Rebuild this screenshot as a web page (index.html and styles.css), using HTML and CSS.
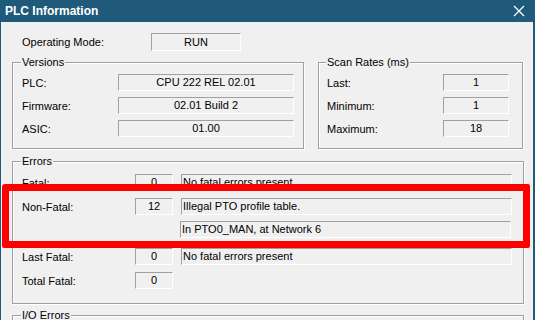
FILE: index.html
```html
<!DOCTYPE html>
<html lang="en">
<head>
    <meta charset="UTF-8">
    <title>PLC Information</title>
    <link rel="stylesheet" href="styles.css">
</head>
<body>
    <div class="window">
        <div class="titlebar">
            <span class="title">PLC Information</span>
            <svg class="close" width="12" height="12" viewBox="0 0 12 12">
                <path d="M1 1 L11 11 M11 1 L1 11" stroke="#fff" stroke-width="1.3" fill="none"/>
            </svg>
        </div>

        <div class="client">
            <div class="mode-row">
                <span class="label mode-label">Operating Mode:</span>
                <span class="field center mode-field">RUN</span>
            </div>

            <div class="groups">
                <fieldset class="group versions">
                    <legend>Versions</legend>
                    <div class="row first">
                        <span class="label ver-label">PLC:</span>
                        <span class="field center ver-field">CPU 222 REL 02.01</span>
                    </div>
                    <div class="row">
                        <span class="label ver-label">Firmware:</span>
                        <span class="field center ver-field">02.01 Build 2</span>
                    </div>
                    <div class="row">
                        <span class="label ver-label">ASIC:</span>
                        <span class="field center ver-field">01.00</span>
                    </div>
                </fieldset>

                <fieldset class="group scan">
                    <legend>Scan Rates (ms)</legend>
                    <div class="row first">
                        <span class="label scan-label">Last:</span>
                        <span class="field center scan-field">1</span>
                    </div>
                    <div class="row">
                        <span class="label scan-label">Minimum:</span>
                        <span class="field center scan-field">1</span>
                    </div>
                    <div class="row">
                        <span class="label scan-label">Maximum:</span>
                        <span class="field center scan-field">18</span>
                    </div>
                </fieldset>
            </div>

            <fieldset class="group errors">
                <legend>Errors</legend>
                <div class="row first">
                    <span class="label err-label">Fatal:</span>
                    <span class="field center count">0</span>
                    <span class="field message">No fatal errors present</span>
                </div>
                <div class="row gap7">
                    <span class="label err-label">Non-Fatal:</span>
                    <span class="field center count">12</span>
                    <span class="field message">Illegal PTO profile table.</span>
                </div>
                <div class="row gap6">
                    <span class="field message indent">In PTO0_MAN, at Network 6</span>
                </div>
                <div class="row gap10">
                    <span class="label err-label">Last Fatal:</span>
                    <span class="field center count">0</span>
                    <span class="field message">No fatal errors present</span>
                </div>
                <div class="row gap7">
                    <span class="label err-label">Total Fatal:</span>
                    <span class="field center count">0</span>
                </div>
            </fieldset>

            <fieldset class="group io">
                <legend>I/O Errors</legend>
            </fieldset>
        </div>

        <div class="highlight"></div>
    </div>
</body>
</html>
```

FILE: styles.css
```css
body {
    margin: 0;
    font-family: "Liberation Sans", Arial, sans-serif;
    font-size: 11px;
    color: #000;
}
.window {
    position: relative;
    width: 535px;
    height: 320px;
    overflow: hidden;
    background-color: #f0f0f0;
}
.titlebar {
    height: 22px;
    background-color: #1f5a7b;
    color: #fff;
    display: flex;
    align-items: center;
    justify-content: space-between;
    padding: 0 10px 0 5px;
}
.title {
    font-weight: bold;
    font-size: 12px;
}
.client {
    height: 298px;
    box-sizing: border-box;
    border-left: 1px solid #1f5a7b;
    border-right: 2px solid #1f5a7b;
    padding-left: 11px;
    padding-top: 11px;
}
.row {
    display: flex;
    align-items: center;
    height: 17px;
    margin-top: 6px;
}
.row.first {
    margin-top: 0;
}
.row.gap6 { margin-top: 6px; }
.row.gap7 { margin-top: 7px; }
.row.gap10 { margin-top: 10px; }
.label {
    flex: none;
    white-space: nowrap;
}
.field {
    box-sizing: border-box;
    height: 17px;
    line-height: 15px;
    border-top: 1px solid #a0a0a0;
    border-left: 1px solid #a0a0a0;
    border-bottom: 1px solid #fff;
    border-right: 1px solid #fff;
    white-space: nowrap;
    overflow: hidden;
    flex: none;
}
.center {
    text-align: center;
}
.mode-row {
    display: flex;
    align-items: center;
    padding-left: 10px;
    height: 18px;
}
.mode-label {
    width: 129px;
}
.mode-field {
    width: 90px;
    height: 18px;
    line-height: 16px;
}
.groups {
    display: flex;
    margin-top: 5px;
}
.group {
    margin: 0;
    padding: 0 0 11px 9px;
    border: 1px solid #a0a0a0;
    box-shadow: 1px 1px 0 #fff, inset 1px 1px 0 #fff;
    box-sizing: border-box;
    min-width: 0;
}
.group legend {
    padding: 0 1px;
    margin-left: -1px;
    line-height: 13px;
    background-color: #f0f0f0;
}
.versions {
    width: 292px;
    padding-top: 5px;
}
.ver-label {
    width: 96px;
}
.ver-field {
    width: 176px;
}
.scan {
    width: 205px;
    margin-left: 14px;
    padding-left: 8px;
    padding-top: 5px;
}
.scan-label {
    width: 116px;
}
.scan-field {
    width: 66px;
}
.errors {
    width: 512px;
    margin-top: 6px;
    padding-top: 6px;
    padding-bottom: 14px;
}
.err-label {
    width: 113px;
}
.count {
    width: 38px;
}
.message {
    width: 331px;
    margin-left: 8px;
    padding-left: 1px;
}
.indent {
    margin-left: 158px;
}
.io {
    width: 512px;
    height: 40px;
    margin-top: 5px;
}
.highlight {
    position: absolute;
    left: 2px;
    top: 184px;
    width: 528px;
    height: 64px;
    box-sizing: border-box;
    border: 7px solid #ff0000;
    border-radius: 3px 2px 2px 2px;
}
```
